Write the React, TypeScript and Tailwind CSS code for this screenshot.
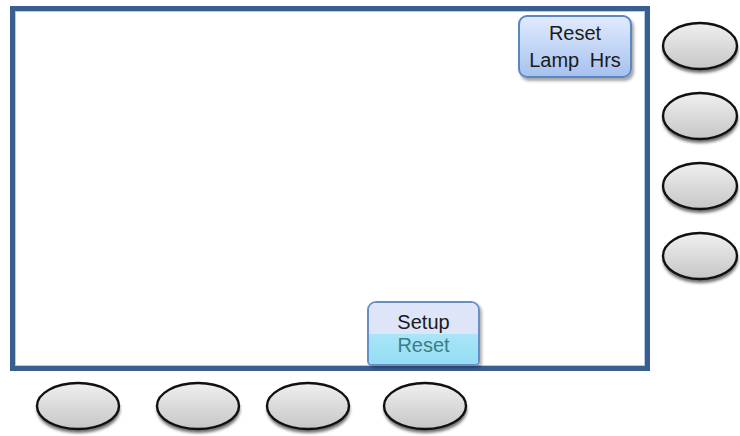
import React from "react";

function Knob({ w = 86 }: { w?: number }) {
  const id = `g${w}`;
  return (
    <svg width={w + 4} height={56} viewBox={`0 0 ${w + 4} 56`} className="block shrink-0">
      <defs>
        <linearGradient id={id} x1="0" y1="0" x2="0" y2="1">
          <stop offset="0" stopColor="#f0f0f0" />
          <stop offset="1" stopColor="#c6c6c6" />
        </linearGradient>
        <filter id={`b${w}`} x="-20%" y="-20%" width="140%" height="160%">
          <feGaussianBlur stdDeviation="1.6" />
        </filter>
      </defs>
      <ellipse cx={w / 2 + 1.5} cy={29} rx={w / 2 - 1.5} ry={23} fill="#6e6e6e" filter={`url(#b${w})`} />
      <ellipse cx={w / 2 + 1} cy={25} rx={w / 2 - 2} ry={23} fill={`url(#${id})`} stroke="#111" strokeWidth="2.4" />
    </svg>
  );
}

export default function App() {
  return (
    <div className="w-[740px] h-[436px] bg-white overflow-hidden font-['Liberation_Sans',Arial,sans-serif]">
      <div className="flex pt-[6px] pl-[10px]">
        <div className="w-[640px] h-[365px] shrink-0 border-[5px] border-[#3a5f8e] shadow-[inset_0_0_0_1px_#b7c9e2] flex flex-col justify-between">
          <div className="flex justify-end pr-[13px] pt-[4px]">
            <div className="w-[114px] h-[63px] rounded-[9px] border-2 border-[#5a86c2] bg-gradient-to-b from-[#e1eafc] to-[#a7c2ef] shadow-[2px_3px_3px_rgba(0,0,0,0.35)] flex flex-col items-center justify-center text-[20px] leading-[27px] text-[#1b1b1b]">
              <span>Reset</span>
              <span className="[word-spacing:5px]">Lamp Hrs</span>
            </div>
          </div>
          <div className="pl-[352px]">
            <div className="w-[113px] h-[65px] rounded-t-[9px] rounded-b-[5px] border-2 border-[#6a8fc6] overflow-hidden flex flex-col text-[20px] shadow-[2px_2px_3px_rgba(0,0,0,0.3)]">
              <div className="h-[31px] bg-[#dfe5f8] flex items-end justify-center leading-[23px] text-[#1b1b1b]">Setup</div>
              <div className="flex-1 bg-gradient-to-b from-[#a8e6f8] to-[#95ddf4] flex items-start justify-center leading-[23px] text-[#3e7c84]">Reset</div>
            </div>
          </div>
        </div>
        <div className="flex flex-col shrink-0 gap-[14px] pl-[10px] pt-[15px]">
          <Knob w={78} />
          <Knob w={78} />
          <Knob w={78} />
          <Knob w={78} />
        </div>
      </div>
      <div className="flex pt-[10px]">
        <div className="ml-[34px]"><Knob w={86} /></div>
        <div className="ml-[30px]"><Knob w={86} /></div>
        <div className="ml-[20px]"><Knob w={86} /></div>
        <div className="ml-[27px]"><Knob w={86} /></div>
      </div>
    </div>
  );
}
